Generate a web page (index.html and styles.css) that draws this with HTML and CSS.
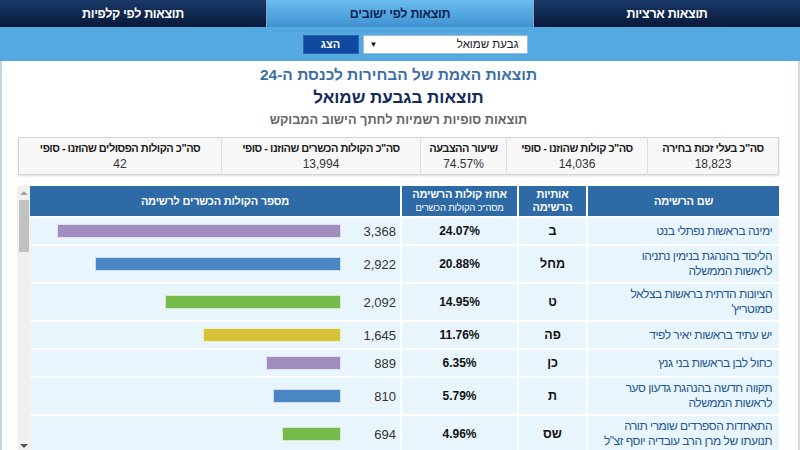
FILE: index.html
```html
<!DOCTYPE html>
<html lang="he" dir="rtl">
<head>
  <meta charset="UTF-8" />
  <meta name="viewport" content="width=device-width, initial-scale=1" />
  <title>תוצאות לפי ישובים</title>
  <link rel="stylesheet" href="styles.css">
</head>
<body>

  <nav class="tabs">
    <a class="tab">תוצאות ארציות</a>
    <a class="tab active">תוצאות לפי ישובים</a>
    <a class="tab">תוצאות לפי קלפיות</a>
  </nav>

  <div class="search-bar">
    <div class="fake-select">
      <span class="select-text">גבעת שמואל</span>
      <span class="select-arrow">▼</span>
    </div>
    <button type="button" class="show-btn">הצג</button>
  </div>

  <div class="content">
    <div class="titles">
      <h1 class="title-main">תוצאות האמת של הבחירות לכנסת ה-24</h1>
      <h2 class="title-city">תוצאות בגבעת שמואל</h2>
      <h3 class="title-sub">תוצאות סופיות רשמיות לחתך הישוב המבוקש</h3>
    </div>

    <table class="summary">
      <tr>
        <th class="c1">סה"כ בעלי זכות בחירה</th>
        <th class="c2">סה"כ קולות שהוזנו - סופי</th>
        <th class="c3">שיעור ההצבעה</th>
        <th class="c4">סה"כ הקולות הכשרים שהוזנו - סופי</th>
        <th class="c5">סה"כ הקולות הפסולים שהוזנו - סופי</th>
      </tr>
      <tr>
        <td>18,823</td>
        <td>14,036</td>
        <td>74.57%</td>
        <td>13,994</td>
        <td>42</td>
      </tr>
    </table>

    <div class="results">
      <div class="results-scroll">
        <table class="parties">
          <thead>
            <tr>
              <th class="col-name">שם הרשימה</th>
              <th class="col-letters">אותיות<br>הרשימה</th>
              <th class="col-pct">אחוז קולות הרשימה<span class="th-small">מסה"כ הקולות הכשרים</span></th>
              <th class="col-votes">מספר הקולות הכשרים לרשימה</th>
            </tr>
          </thead>
          <tbody>
            <tr>
              <td class="name">ימינה בראשות נפתלי בנט</td>
              <td class="letters">ב</td>
              <td class="pct">24.07%</td>
              <td class="votes"><div class="vote-wrap"><span class="num">3,368</span><span class="bar purple" style="width:284px"></span></div></td>
            </tr>
            <tr>
              <td class="name">הליכוד בהנהגת בנימין נתניהו<br>לראשות הממשלה</td>
              <td class="letters">מחל</td>
              <td class="pct">20.88%</td>
              <td class="votes"><div class="vote-wrap"><span class="num">2,922</span><span class="bar blue" style="width:246px"></span></div></td>
            </tr>
            <tr>
              <td class="name">הציונות הדתית בראשות בצלאל<br>סמוטריץ'</td>
              <td class="letters">ט</td>
              <td class="pct">14.95%</td>
              <td class="votes"><div class="vote-wrap"><span class="num">2,092</span><span class="bar green" style="width:176px"></span></div></td>
            </tr>
            <tr>
              <td class="name">יש עתיד בראשות יאיר לפיד</td>
              <td class="letters">פה</td>
              <td class="pct">11.76%</td>
              <td class="votes"><div class="vote-wrap"><span class="num">1,645</span><span class="bar yellow" style="width:138px"></span></div></td>
            </tr>
            <tr>
              <td class="name">כחול לבן בראשות בני גנץ</td>
              <td class="letters">כן</td>
              <td class="pct">6.35%</td>
              <td class="votes"><div class="vote-wrap"><span class="num">889</span><span class="bar purple" style="width:75px"></span></div></td>
            </tr>
            <tr>
              <td class="name">תקווה חדשה בהנהגת גדעון סער<br>לראשות הממשלה</td>
              <td class="letters">ת</td>
              <td class="pct">5.79%</td>
              <td class="votes"><div class="vote-wrap"><span class="num">810</span><span class="bar blue" style="width:68px"></span></div></td>
            </tr>
            <tr>
              <td class="name">התאחדות הספרדים שומרי תורה<br>תנועתו של מרן הרב עובדיה יוסף זצ"ל</td>
              <td class="letters">שס</td>
              <td class="pct">4.96%</td>
              <td class="votes"><div class="vote-wrap"><span class="num">694</span><span class="bar green" style="width:59px"></span></div></td>
            </tr>
          </tbody>
        </table>
      </div>
      <div class="scrollbar">
        <span class="arrow-up"></span>
        <span class="thumb"></span>
        <span class="arrow-down"></span>
      </div>
    </div>
  </div>

</body>
</html>
```

FILE: styles.css
```css
* {
  box-sizing: border-box;
}

html, body {
  overflow: hidden;
}

body {
  margin: 0;
  background: #ffffff;
  font-family: 'Liberation Sans', 'DejaVu Sans', sans-serif;
  direction: rtl;
  color: #222;
}

/* top tabs */
.tabs {
  display: flex;
  height: 27px;
}

.tab {
  flex: 1;
  display: flex;
  align-items: center;
  justify-content: center;
  color: #ffffff;
  font-size: 12.5px;
  letter-spacing: -0.3px;
  font-weight: bold;
  background: linear-gradient(to bottom, #1a3868, #08193a);
  border-left: 1px solid #8fa3bd;
}

.tab:last-child {
  border-left: none;
}

.tab.active {
  color: #0e2550;
  background: linear-gradient(to bottom, #6abcf0, #3f92d0);
}

/* search bar */
.search-bar {
  height: 34px;
  background: #55a9e1;
  display: flex;
  align-items: center;
  justify-content: center;
  gap: 4px;
  padding-left: 30px;
}

.fake-select {
  width: 165px;
  height: 19px;
  background: #ffffff;
  border: 1px solid #9fbcd6;
  display: flex;
  align-items: center;
  justify-content: space-between;
  padding: 0 8px 0 6px;
  font-size: 11.5px;
  color: #222;
}

.select-arrow {
  font-size: 8px;
  color: #111;
}

.show-btn {
  width: 56px;
  height: 19px;
  background: #0f4aa0;
  border: 1px solid #2c63b5;
  color: #ffffff;
  font-family: inherit;
  font-size: 11px;
  font-weight: bold;
  padding: 0;
}

/* page content */
.content {
  border-left: 2px solid #c6d3e1;
  border-right: 2px solid #d6d9dd;
  padding: 0 19px 0 16px;
}

.titles {
  text-align: center;
  padding-top: 3px;
}

.titles h1,
.titles h2,
.titles h3 {
  margin: 0;
  font-weight: bold;
}

.title-main {
  font-size: 15.5px;
  line-height: 22px;
  color: #3b6ea8;
}

.title-city {
  font-size: 17px;
  line-height: 24px;
  color: #132a5a;
}

.title-sub {
  font-size: 12.75px;
  line-height: 20px;
  color: #666;
}

/* summary numbers */
.summary {
  width: 100%;
  margin-top: 7px;
  border-collapse: collapse;
  background: #f7f7f7;
  border: 1px solid #d4d4d4;
  box-shadow: 0 1px 2px rgba(0, 0, 0, 0.15);
  font-size: 11px;
  text-align: center;
}

.summary th {
  height: 19px;
  font-weight: bold;
  letter-spacing: -0.5px;
  color: #1a1a1a;
  padding: 2px 0 0;
  border-left: 1px solid #e0e0e0;
}

.summary td {
  height: 18px;
  font-size: 12px;
  color: #333;
  padding: 0 0 2px;
  border-left: 1px solid #e0e0e0;
}

.summary th:last-child,
.summary td:last-child {
  border-left: none;
}

.summary .c1 { width: 131px; }
.summary .c2 { width: 141px; }
.summary .c3 { width: 86px; }
.summary .c4 { width: 199px; }

/* results table */
.results {
  display: flex;
  margin-top: 10px;
  margin-left: -1px;
  height: 265px;
  overflow: hidden;
}

.results-scroll {
  flex: 1;
  padding-top: 1px;
}

.parties {
  width: calc(100% + 4px);
  margin: -2px;
  border-collapse: separate;
  border-spacing: 2px;
  font-size: 11px;
  table-layout: fixed;
}

.parties th {
  background: #2e6aa6;
  color: #ffffff;
  font-weight: bold;
  letter-spacing: -0.2px;
  height: 30px;
  line-height: 13px;
  text-align: center;
  padding: 1px 4px;
}

.th-small {
  display: block;
  font-size: 9.5px;
  font-weight: normal;
}

.col-name { width: 191px; }
.col-letters { width: 67px; }
.col-pct { width: 115px; }

.parties td {
  background: #e8f5fd;
}

.parties .name {
  color: #1f5791;
  font-size: 12px;
  letter-spacing: -0.5px;
  line-height: 15px;
  padding: 3px 7px;
  text-align: right;
  white-space: nowrap;
}

.parties .letters {
  text-align: center;
  font-weight: bold;
  font-size: 12.5px;
  line-height: 15px;
  color: #111;
}

.parties .pct {
  text-align: center;
  font-weight: bold;
  font-size: 12px;
  line-height: 15px;
  color: #111;
}

.parties .votes {
  padding: 6px 4px 6px 0;
}

.vote-wrap {
  display: flex;
  align-items: center;
  height: 14px;
}

.vote-wrap .num {
  width: 46px;
  font-size: 13px;
  color: #333;
  text-align: right;
}

.vote-wrap .bar {
  height: 14px;
  margin-right: 9px;
  border: 1px solid rgba(255, 255, 255, 0.7);
}

.bar.purple { background: #a08dbf; }
.bar.blue { background: #4a86c4; }
.bar.green { background: #76ba4b; }
.bar.yellow { background: #d6c236; }

/* fake scrollbar on the left side */
.scrollbar {
  width: 13px;
  background: #f0f0f0;
  position: relative;
  margin-top: 1px;
}

.thumb {
  position: absolute;
  top: 14px;
  left: 2px;
  width: 10px;
  height: 52px;
  background: #c1c1c1;
}

.arrow-up,
.arrow-down {
  position: absolute;
  left: 3px;
  width: 0;
  height: 0;
  border-left: 4px solid transparent;
  border-right: 4px solid transparent;
}

.arrow-up {
  top: 5px;
  border-bottom: 4px solid #a3a3a3;
}

.arrow-down {
  bottom: 2px;
  border-top: 4px solid #505050;
}
```
